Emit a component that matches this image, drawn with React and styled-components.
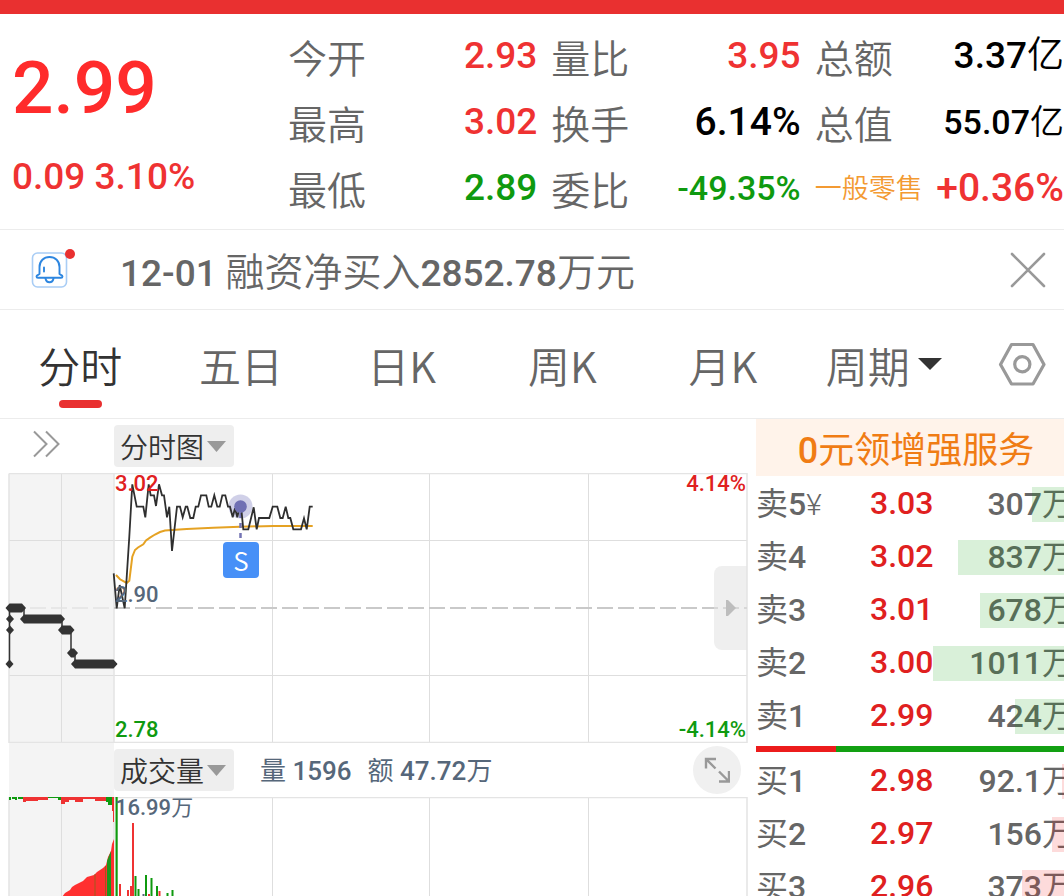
import React from "react"
import styled, { createGlobalStyle } from "styled-components"

const cjk = `"Noto Sans CJK SC", sans-serif`
const numeric = `Roboto, "Noto Sans CJK SC", sans-serif`

const colors = {
  red: "#ef3232",
  deepRed: "#e02020",
  green: "#0f9a0f",
  text: "#333333",
  label: "#666666",
  slate: "#56677a",
  orange: "#f39a32",
  black: "#000000",
}

const stats = [
  [
    { label: "今开", value: "2.93", color: "red" },
    { label: "最高", value: "3.02", color: "red" },
    { label: "最低", value: "2.89", color: "green" },
  ],
  [
    { label: "量比", value: "3.95", color: "red" },
    { label: "换手", value: "6.14%", color: "black", size: 39 },
    { label: "委比", value: "-49.35%", color: "green", size: 34 },
  ],
  [
    { label: "总额", value: "3.37亿", color: "black" },
    { label: "总值", value: "55.07亿", color: "black", size: 34 },
    { label: "一般零售", value: "+0.36%", color: "red", size: 39, tag: true },
  ],
]

const tabs = ["分时", "五日", "日K", "周K", "月K"]

const asks = [
  { name: "卖5", price: "3.03", amount: "307万", bar: 32, mark: "¥" },
  { name: "卖4", price: "3.02", amount: "837万", bar: 106 },
  { name: "卖3", price: "3.01", amount: "678万", bar: 84 },
  { name: "卖2", price: "3.00", amount: "1011万", bar: 131 },
  { name: "卖1", price: "2.99", amount: "424万", bar: 49 },
]

const bids = [
  { name: "买1", price: "2.98", amount: "92.1万", bar: 2 },
  { name: "买2", price: "2.97", amount: "156万", bar: 12 },
  { name: "买3", price: "2.96", amount: "373万", bar: 42 },
]

const pricePoints =
  "113.7,100.3 116.7,135.3 119.7,112 124.7,135.3 129.3,63.7 132.3,11.3 136.7,33.7 143.3,33.7 145.3,44.3 148.7,11.3 150.7,22.3 154,22.3 156,33 159,11.3 162,22.3 164,22.3 167,44.3 169.3,33.7 172,78 177,33.7 180,33.7 182.7,44.3 185.7,33.7 187.3,33.7 190.3,45 193.3,45 195.7,33.7 198.3,33.7 201,22.3 206.3,22.3 208.7,33.7 211.3,33.7 214.3,22.3 217.3,33.7 219.7,33.7 222.3,22.3 225.3,22.3 228,33.7 230,33.7 232.7,44.3 235,35.3 237.3,44.3 239.3,35.3 241.3,36 243.3,56.3 248.3,56.3 253.7,34.3 256.7,56.3 259,45 269.3,45 272.7,33.7 277.3,33.7 280.3,45 282.7,45 285.7,33.7 288.3,45 290.3,45 293.3,56.3 301,56.3 304,45.3 306.7,56.3 309.7,33.7 312.7,33.7"

const averagePoints =
  "116,102 120,106.3 126.7,110 129.3,107.7 132.3,83.7 135,77 138,74.5 143.3,71.3 146,67.5 150,64.7 155,61.5 160,59 165,57.6 172,57 186.7,56 213.3,54.7 240,53.7 273.3,53 312.7,53"

const auctionPoints =
  "9.5,191 9.5,135 24,135 24,146 62,146 62,157 71,157 71,180 75,180 75,191 117,191"

// [x1, x2, y] of every run of auction quotes
const auctionRuns = [
  [5.5, 26, 135],
  [20, 65, 146],
  [58, 74.5, 157],
  [67, 78, 180],
  [71, 117.5, 191],
  [6, 14, 146],
  [6, 14, 157],
  [5.5, 13.5, 191],
]

const gridX = [61.5, 272.5, 429.5, 588.5]

// [x, width, height, color] of the bars that hang from the top
const hangingBars = [
  [9, 2, 3, "green"],
  [12, 3, 2, "green"],
  [15, 2, 3, "green"],
  [18, 5, 2, "green"],
  [23, 3, 5, "red"],
  [26, 12, 4, "red"],
  [38, 10, 3, "red"],
  [48, 10, 1, "green"],
  [58, 3, 3, "green"],
  [61, 4, 7, "red"],
  [65, 4, 5, "red"],
  [69, 6, 3, "red"],
  [75, 8, 5, "red"],
  [83, 12, 2, "red"],
  [95, 11, 4, "red"],
  [106, 3, 5, "green"],
  [108, 4, 8, "green"],
  [112, 1, 14, "red"],
  [113, 1, 25, "red"],
]

// [x, top, color]
const volumeBars = [
  [119, 87, "red"],
  [127, 93, "red"],
  [130, 89, "red"],
  [132, 26, "red"],
  [134.5, 79, "green"],
  [137.5, 92, "green"],
  [142.5, 97, "slate"],
  [145, 78, "green"],
  [148, 97, "red"],
  [150.5, 81, "green"],
  [156, 89, "green"],
  [158.5, 94, "red"],
  [166.5, 96, "green"],
  [171.5, 93, "green"],
]

const GlobalStyle = createGlobalStyle`
  * {
    box-sizing: border-box;
  }

  body {
    margin: 0;
    background: #ffffff;
    font-family: ${cjk};
    color: ${colors.text};
  }

  button {
    border: 0;
    padding: 0;
    margin: 0;
    background: none;
    color: inherit;
    font: inherit;
    cursor: pointer;
  }

  svg {
    display: block;
  }
`

const Page = styled.div`
  height: 100vh;
  overflow: hidden;
  display: flex;
  flex-direction: column;
`

const Digits = styled.span`
  font-family: ${numeric};
  font-size: ${({ $size }) => ($size ? `${$size}px` : "inherit")};
  font-weight: 500;
`

const TopBar = styled.div`
  flex: none;
  height: 14px;
  background: #e93030;
`

const Summary = styled.header`
  flex: none;
  display: flex;
  padding: 9px 0 8px;
  border-bottom: 1px solid #ececec;
`

const Quote = styled.div`
  width: 288px;
  padding-left: 12px;
  font-family: ${numeric};
  font-weight: 500;
  color: #ff2b2b;
`

const Price = styled.div`
  font-size: 73px;
  line-height: 130px;
`

const Change = styled.div`
  font-size: 37px;
  line-height: 48px;
  color: ${colors.red};
`

const Stats = styled.dl`
  flex: 1;
  margin: 0;
  display: grid;
  grid-template-columns: repeat(3, 1fr);
  column-gap: 14px;
`

const Stat = styled.div`
  display: flex;
  justify-content: space-between;
  height: 66px;
  line-height: 66px;
  white-space: nowrap;
`

const StatLabel = styled.dt`
  font-size: ${({ $tag }) => ($tag ? 27 : 39)}px;
  line-height: ${({ $tag }) => ($tag ? 64 : 66)}px;
  font-weight: 350;
  color: ${({ $tag }) => ($tag ? colors.orange : colors.label)};
`

const StatValue = styled.dd`
  margin: 0;
  font-family: ${numeric};
  font-size: ${({ $size }) => $size || 37}px;
  font-weight: 350;
  color: ${({ $color }) => colors[$color]};
`

const Notice = styled.section`
  flex: none;
  display: flex;
  align-items: center;
  height: 80px;
  padding: 0 18px 0 30px;
  border-bottom: 1px solid #ececec;
`

const NoticeText = styled.p`
  flex: 1;
  margin: 0 0 0 42px;
  padding-top: 3px;
  font-size: 39px;
  font-weight: 350;
  line-height: 56px;
  color: ${colors.label};
`

const Tabs = styled.nav`
  flex: none;
  display: grid;
  grid-template-columns: repeat(6, 1fr) 100px;
  height: 109px;
  border-bottom: 1px solid #ececec;
`

const Tab = styled.button`
  position: relative;
  display: flex;
  align-items: center;
  justify-content: center;
  gap: 8px;
  font-size: 42px;
  font-weight: 350;
  white-space: nowrap;
  color: ${({ $active }) => ($active ? colors.text : colors.label)};

  &::after {
    content: "";
    display: ${({ $active }) => ($active ? "block" : "none")};
    position: absolute;
    bottom: 10px;
    width: 43px;
    height: 8px;
    border-radius: 4px;
    background: #e93030;
  }
`

const SettingsButton = styled.button`
  display: flex;
  align-items: center;
  justify-content: flex-end;
  padding-right: 18px;
`

const Body = styled.main`
  flex: 1;
  min-height: 0;
  display: grid;
  grid-template-columns: minmax(0, 1fr) 308px;
  column-gap: 8px;
`

const Charts = styled.section`
  display: flex;
  flex-direction: column;
`

const Toolbar = styled.div`
  flex: none;
  display: flex;
  align-items: center;
  height: 54px;
  padding-right: 7px;
  background: ${({ $shaded }) =>
    $shaded
      ? "linear-gradient(#f4f4f4, #f4f4f4) 9px 0 / 105px 100% no-repeat"
      : "none"};
`

const ToolbarSide = styled.div`
  width: 114px;
  padding-left: 32px;
`

const Pill = styled.button`
  display: flex;
  align-items: center;
  gap: 3px;
  height: 42px;
  padding: 0 8px 0 6px;
  border-radius: 4px;
  background: #eeeeee;
  font-size: 28px;
  font-weight: 350;
  line-height: 42px;
`

const Totals = styled.div`
  flex: 1;
  display: flex;
  gap: 16px;
  margin-left: 26px;
  padding-top: 2px;
  font-family: ${numeric};
  font-size: 26px;
  line-height: 48px;
  color: ${colors.slate};
`

const ExpandButton = styled.button`
  display: flex;
  align-items: center;
  justify-content: center;
  width: 48px;
  height: 48px;
  border-radius: 50%;
  background: #f0f0f0;
`

const Plot = styled.div`
  flex: none;
  position: relative;

  > svg {
    width: 100%;
    height: ${({ $height }) => $height}px;
  }
`

const AxisLabel = styled.span`
  position: absolute;
  font-family: ${numeric};
  font-size: 22px;
  line-height: 26px;
  color: ${({ $color }) => colors[$color]};
`

const TopLeft = styled(AxisLabel)`
  top: -2px;
  left: 115px;
`

const TopRight = styled(AxisLabel)`
  top: -2px;
  right: 2px;
`

const MiddleLeft = styled(AxisLabel)`
  top: 109px;
  left: 115px;
`

const BottomLeft = styled(AxisLabel)`
  bottom: 0;
  left: 115px;
`

const BottomRight = styled(AxisLabel)`
  bottom: 0;
  right: 2px;
`

const SellMark = styled.span`
  position: absolute;
  top: 69px;
  left: 223px;
  width: 36px;
  height: 36px;
  border-radius: 4px;
  background: #4790f7;
  font-size: 26px;
  font-weight: 350;
  line-height: 35px;
  text-align: center;
  color: #ffffff;
`

const Handle = styled.button`
  position: absolute;
  top: 93px;
  right: 1px;
  display: flex;
  align-items: center;
  justify-content: center;
  width: 33px;
  height: 84px;
  border-radius: 8px 0 0 8px;
  background: rgba(225, 225, 225, 0.55);
`

const Book = styled.aside`
  overflow: hidden;
`

const Promo = styled.a`
  display: block;
  height: 57px;
  margin-bottom: 2px;
  padding-left: 12px;
  background: #fff3ea;
  font-size: 36px;
  line-height: 56px;
  text-align: center;
  text-decoration: none;
  color: #f07c14;
`

const BookTable = styled.table`
  width: 100%;
  border-collapse: collapse;
  table-layout: fixed;
  font-family: ${numeric};
  font-size: 32px;
`

const BookRow = styled.tr`
  position: relative;
  height: 53px;
`

const BookName = styled.th`
  width: 114px;
  padding: 0;
  font-weight: 400;
  line-height: 53px;
  text-align: left;
  color: ${colors.label};
`

const Mark = styled.span`
  font-size: 30px;
  font-weight: 300;
`

const BookPrice = styled.td`
  width: 64px;
  padding: 0;
  font-weight: 500;
  line-height: 50px;
  vertical-align: top;
  color: ${colors.deepRed};
`

const BookAmount = styled.td`
  padding: 0;
  line-height: 53px;
  white-space: nowrap;
  color: ${colors.label};
`

const Amount = styled.div`
  margin-right: -10px;
  text-align: right;
`

const DepthBar = styled.span`
  position: absolute;
  top: 9px;
  right: 0;
  height: 35px;
  background: ${({ $side }) =>
    $side === "ask" ? "rgba(20, 160, 20, 0.16)" : "rgba(240, 30, 30, 0.16)"};
`

const Ratio = styled.div`
  display: flex;
  height: 6px;
  margin: 3px 0;
  background: #12a012;
`

const RatioBuy = styled.div`
  width: 26%;
  background: #ec1c1c;
`

// sets the figures of a text heavier than the characters around them
const Mixed = ({ children, size }) =>
  children.split(/([-+\d.%]+)/).map((part, i) =>
    i % 2 ? (
      <Digits key={i} $size={size}>
        {part}
      </Digits>
    ) : (
      part
    )
  )

const Caret = ({ width, height, color }) => (
  <svg width={width} height={height} viewBox="0 0 20 10" preserveAspectRatio="none">
    <path d="M0 0h20L10 10z" fill={color} />
  </svg>
)

const BellIcon = () => (
  <svg width="48" height="48" viewBox="0 0 48 48" fill="none">
    <rect x="2.5" y="7" width="34" height="34" rx="5" stroke="#a9cdf5" strokeWidth="1.6" />
    <g stroke="#2d86e0" strokeWidth="1.9" strokeLinejoin="round" strokeLinecap="round">
      <path d="M9.500 28V21C9.500 15 13.800 11 19.500 11S29.500 15 29.500 21V28C30.200 29 32.500 29 32.500 30.500C32.500 31.500 32 31.800 31 31.800H8C7 31.800 6.500 31.500 6.500 30.500C6.500 29 8.800 29 9.500 28z" />
      <path d="M15.500 32.500C16.500 37.500 22.500 37.500 23.500 32.500M14 21.500V25.500" />
    </g>
    <circle cx="40" cy="8" r="5" fill="#e93030" />
  </svg>
)

const CloseIcon = () => (
  <svg width="36" height="36" viewBox="0 0 36 36" stroke="#999999" strokeWidth="2.6" strokeLinecap="round">
    <path d="M2 2l32 32M34 2L2 34" />
  </svg>
)

const SettingsIcon = () => (
  <svg width="48" height="44" viewBox="0 0 48 44" fill="none" stroke="#999999" strokeWidth="3.2" strokeLinejoin="round">
    <path d="M13.500 2.500h21.500L46 22.500L35 42H13.500L2.500 22.500z" />
    <circle cx="24.300" cy="22.300" r="7.600" />
  </svg>
)

const DoubleChevron = () => (
  <svg width="28" height="28" viewBox="0 0 28 28" fill="none" stroke="#999999" strokeWidth="2">
    <path d="M2 1.500L14.500 14L2 26.500M14 1.500L26.500 14L14 26.500" />
  </svg>
)

const ExpandIcon = () => (
  <svg width="26" height="26" viewBox="0 0 26 26" fill="none" stroke="#999999" strokeWidth="2.4">
    <path d="M12 2H2v9.500M2 2l9.500 9.500M25 14v10.500H15M25 24.500L15 14.500" />
  </svg>
)

const PriceChart = () => (
  <svg viewBox="0 0 748 270" preserveAspectRatio="none">
    <rect x="9" y="0" width="105" height="270" fill="#f4f4f4" />
    {gridX.map(x => (
      <path key={x} d={`M${x} 0V270`} stroke="#dedede" />
    ))}
    <path d="M9 67.500H747M9 202.500H747" stroke="#dedede" />
    <path d="M9 .5H747V269.500H9V.5M114 0V270" fill="none" stroke="#e4e4e4" strokeWidth="1.5" />
    <path d="M9 135H114" stroke="#e2e2e2" strokeWidth="1.5" strokeDasharray="16 5" />
    <path d="M114 135H747" stroke="#c9c9c9" strokeWidth="2" strokeDasharray="16 5" />
    <polyline points={auctionPoints} fill="none" stroke="#333333" strokeWidth="1.5" />
    {auctionRuns.map(([x1, x2, y], i) => (
      <polygon
        key={i}
        fill="#333333"
        points={`${x1},${y} ${x1 + 4},${y - 4.5} ${x2 - 4},${y - 4.5} ${x2},${y} ${x2 - 4},${y + 4.5} ${x1 + 4},${y + 4.5}`}
      />
    ))}
    <polyline points={averagePoints} fill="none" stroke="#e5a223" strokeWidth="2" />
    <path d="M240.500 40V69" stroke="#7474b4" strokeWidth="2.5" strokeDasharray="5 5" />
    <circle cx="240.500" cy="33.500" r="12" fill="#7070b8" fillOpacity="0.33" />
    <polyline points={pricePoints} fill="none" stroke="#2f2f2f" strokeWidth="1.8" />
    <circle cx="240.500" cy="33.500" r="6.3" fill="#7070b4" />
  </svg>
)

const VolumeChart = () => (
  <svg viewBox="0 0 748 100" preserveAspectRatio="none">
    <rect x="9" y="0" width="105" height="100" fill="#f4f4f4" />
    {gridX.map(x => (
      <path key={x} d={`M${x} 0V100`} stroke="#dedede" />
    ))}
    <path d="M114 .5H747V100M9 0V100M114 0V100" fill="none" stroke="#e4e4e4" strokeWidth="1.5" />
    <polygon
      fill="#ff3030"
      points="62,100 65,96 70,93 72,90 75,88 83,84 87,80 94,78 97,75 103,71 106,68 108,60 111,54 112,47 114,42 114,100"
    />
    <path d="M95 77V100M105.500 69V100" stroke="#a05a1c" />
    <path d="M107 100V64L111 54V100z" fill="#1d961d" />
    {hangingBars.map(([x, width, height, color]) => (
      <rect key={x} x={x} y="0" width={width} height={height} fill={colors[color]} />
    ))}
    {volumeBars.map(([x, top, color]) => (
      <rect key={x} x={x} y={top} width="2" height={100 - top} fill={colors[color]} />
    ))}
    <rect x="115.500" y="0" width="2.2" height="100" fill={colors.green} />
  </svg>
)

const BookSide = ({ rows, side }) => (
  <BookTable>
    <tbody>
      {rows.map(({ name, price, amount, bar, mark }) => (
        <BookRow key={name}>
          <BookName scope="row">
            <Mixed>{name}</Mixed>
            {mark && <Mark>{mark}</Mark>}
          </BookName>
          <BookPrice>{price}</BookPrice>
          <BookAmount>
            <Amount>
              <Mixed>{amount}</Mixed>
            </Amount>
            <DepthBar $side={side} style={{ width: bar }} />
          </BookAmount>
        </BookRow>
      ))}
    </tbody>
  </BookTable>
)

export default () => (
  <Page>
    <GlobalStyle />
    <TopBar />
    <Summary>
      <Quote>
        <Price>2.99</Price>
        <Change>0.09 3.10%</Change>
      </Quote>
      <Stats>
        {stats.map((column, i) => (
          <div key={i}>
            {column.map(({ label, value, color, size, tag }) => (
              <Stat key={label}>
                <StatLabel $tag={tag}>{label}</StatLabel>
                <StatValue $color={color} $size={size}>
                  <Mixed>{value}</Mixed>
                </StatValue>
              </Stat>
            ))}
          </div>
        ))}
      </Stats>
    </Summary>
    <Notice>
      <BellIcon />
      <NoticeText>
        <Mixed size={37}>12-01 融资净买入2852.78万元</Mixed>
      </NoticeText>
      <button aria-label="关闭">
        <CloseIcon />
      </button>
    </Notice>
    <Tabs>
      {tabs.map((name, i) => (
        <Tab key={name} $active={i === 0}>
          {name}
        </Tab>
      ))}
      <Tab>
        周期
        <Caret width="24" height="12" color="#333333" />
      </Tab>
      <SettingsButton aria-label="设置">
        <SettingsIcon />
      </SettingsButton>
    </Tabs>
    <Body>
      <Charts>
        <Toolbar>
          <ToolbarSide>
            <button aria-label="展开">
              <DoubleChevron />
            </button>
          </ToolbarSide>
          <Pill>
            分时图
            <Caret width="19" height="11" color="#999999" />
          </Pill>
        </Toolbar>
        <Plot $height={270}>
          <PriceChart />
          <TopLeft $color="deepRed">
            <Mixed>3.02</Mixed>
          </TopLeft>
          <TopRight $color="deepRed">
            <Mixed>4.14%</Mixed>
          </TopRight>
          <MiddleLeft $color="slate">
            <Mixed>2.90</Mixed>
          </MiddleLeft>
          <BottomLeft $color="green">
            <Mixed>2.78</Mixed>
          </BottomLeft>
          <BottomRight $color="green">
            <Mixed>-4.14%</Mixed>
          </BottomRight>
          <SellMark>S</SellMark>
          <Handle aria-label="下一页">
            <svg width="10" height="16" viewBox="0 0 10 16">
              <path d="M0 0h2l8 8l-8 8H0z" fill="#bdbdbd" />
            </svg>
          </Handle>
        </Plot>
        <Toolbar $shaded>
          <ToolbarSide />
          <Pill>
            成交量
            <Caret width="19" height="11" color="#999999" />
          </Pill>
          <Totals>
            <span>
              <Mixed>量 1596</Mixed>
            </span>
            <span>
              <Mixed>额 47.72万</Mixed>
            </span>
          </Totals>
          <ExpandButton aria-label="全屏">
            <ExpandIcon />
          </ExpandButton>
        </Toolbar>
        <Plot $height={100}>
          <VolumeChart />
          <TopLeft $color="slate">
            <Mixed>16.99万</Mixed>
          </TopLeft>
        </Plot>
      </Charts>
      <Book>
        <Promo href="#service">
          <Mixed>0元领增强服务</Mixed>
        </Promo>
        <BookSide rows={asks} side="ask" />
        <Ratio>
          <RatioBuy />
        </Ratio>
        <BookSide rows={bids} side="bid" />
      </Book>
    </Body>
  </Page>
)
